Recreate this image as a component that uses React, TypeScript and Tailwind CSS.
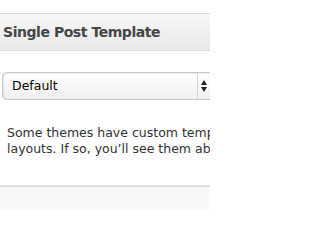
export default function App() {
  return (
    <div className="w-[210px] h-[210px] overflow-hidden bg-white font-['DejaVu_Sans',sans-serif] text-[#333]">
      <div className="h-[13px]" />
      <div className="h-[38px] border-y border-[#dcdcdc] bg-gradient-to-b from-[#f7f7f7] to-[#e9e9e9] flex items-center pl-[3px] whitespace-nowrap">
        <span className="text-[14px] font-bold text-[#464646] tracking-[-0.45px]">Single Post Template</span>
      </div>
      <div className="h-[21px]" />
      <div className="ml-[2px] w-[215px] h-[28px] rounded-[5px] border border-[#c8c8c8] bg-gradient-to-b from-white to-[#f0f0f0] flex items-center shadow-[inset_1px_1px_1px_rgba(0,0,0,0.08)]">
        <span className="pl-[9px] text-[12.5px] text-black flex-1">Default</span>
        <div className="w-px h-full bg-[#d4d4d4]" />
        <div className="w-[18px] flex justify-start pl-[3px]">
          <svg width="6" height="12" viewBox="0 0 6 12">
            <path d="M3 0 L6 5 L0 5 Z" fill="#222" />
            <path d="M0 7 L6 7 L3 12 Z" fill="#222" />
          </svg>
        </div>
      </div>
      <div className="h-[25px]" />
      <p className="pl-[7px] text-[12.5px] leading-[16px] text-[#333] whitespace-nowrap overflow-hidden">
        Some themes have custom templates you
        <br />
        layouts. If so, you’ll see them above.
      </p>
      <div className="h-[28px]" />
      <div className="h-[2px] bg-[#dedede]" />
      <div className="h-[30px] bg-[#f8f8f8]" />
    </div>
  );
}
